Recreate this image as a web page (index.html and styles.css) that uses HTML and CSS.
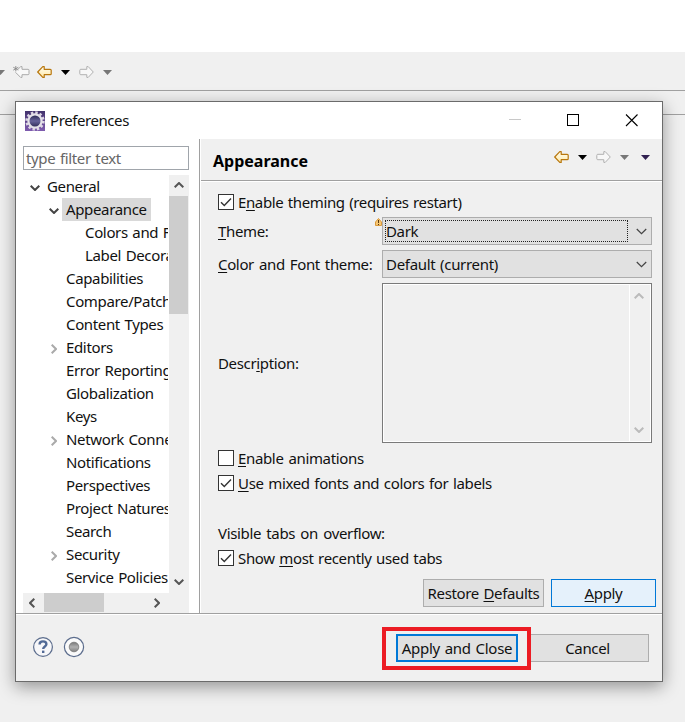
FILE: index.html
```
<!DOCTYPE html>
<html lang="en">
<head>
<meta charset="utf-8">
<title>Preferences</title>
<link rel="stylesheet" href="styles.css">
</head>
<body>
<svg class="defs" aria-hidden="true">
  <defs>
    <linearGradient id="gold" x1="0" y1="0" x2="0" y2="1"><stop offset="0" stop-color="#fffdf0"/><stop offset="1" stop-color="#ffe9a8"/></linearGradient>
    <linearGradient id="purple" x1="0" y1="0" x2="0" y2="1"><stop offset="0" stop-color="#42326c"/><stop offset="1" stop-color="#7f5caf"/></linearGradient>
    <linearGradient id="lens" x1="0" y1="0" x2="0" y2="1"><stop offset="0" stop-color="#22204a"/><stop offset=".5" stop-color="#67639a"/><stop offset="1" stop-color="#29264f"/></linearGradient>
    <linearGradient id="dot" x1="0" y1="0" x2="0" y2="1"><stop offset="0" stop-color="#777"/><stop offset=".5" stop-color="#b0b0b0"/><stop offset="1" stop-color="#808080"/></linearGradient>
    <symbol id="left" viewBox="0 0 15 12"><path d="M.7 6 5.8.6H7.2V3.3H13.2Q14.2 3.3 14.2 4.3V7.7Q14.2 8.7 13.2 8.7H7.2V11.4H5.8Z" stroke-linejoin="round"/></symbol>
    <symbol id="right" viewBox="0 0 15 12"><path d="M14.3 6 9.2.6H7.8V3.3H1.8Q.8 3.3.8 4.3V7.7Q.8 8.7 1.8 8.7H7.8V11.4H9.2Z" stroke-linejoin="round"/></symbol>
    <symbol id="tri" viewBox="0 0 9 5"><path d="M0 0H9L4.5 5Z"/></symbol>
    <symbol id="check" viewBox="0 0 14 14"><path d="M2 7.2 5.3 10.5 12 3.5" fill="none" stroke="#333" stroke-width="1.4"/></symbol>
    <symbol id="chev" viewBox="0 0 10 6"><path d="M.7.7 5 5 9.3.7" fill="none" stroke="currentColor" stroke-width="var(--w, 2)"/></symbol>
  </defs>
</svg>

<div class="menubar"></div>
<div class="toolbar">
  <svg class="tri gray edge"><use href="#tri"/></svg>
  <svg class="star-arrow" width="17" height="14" viewBox="0 0 17 14"><path d="M5 4.2 7.8 1.6H9V4.3H15Q16 4.3 16 5.3V8.7Q16 9.7 15 9.7H9V12.4H7.6L2.5 7.3" fill="#f8f8f8" stroke="#a9a9a9"/><path d="M2.8 1V6.4M.3 2.3 5.3 5.1M5.3 2.3 .3 5.1" stroke="#888" stroke-width=".9"/></svg>
  <svg class="arrow gold"><use href="#left"/></svg>
  <svg class="tri"><use href="#tri"/></svg>
  <svg class="arrow pale"><use href="#right"/></svg>
  <svg class="tri gray"><use href="#tri"/></svg>
</div>
<div class="tabstrip"></div>

<div class="dialog">
  <div class="titlebar">
    <svg width="20" height="20" viewBox="0 0 20 20"><rect width="20" height="20" fill="url(#purple)"/><circle cx="10" cy="10" r="8.4" fill="none" stroke="#dcd6e4" stroke-width="2.6" stroke-dasharray="2.4 2"/><circle cx="10" cy="10" r="6.6" fill="url(#lens)" stroke="#e4e1e8" stroke-width="2.2"/></svg>
    <span class="title">Preferences</span>
    <svg class="winctl" width="129" height="14" viewBox="0 0 129 14"><path d="M0 6.5H12" stroke="#c8c8c8"/><rect x="58.5" y="1.5" width="11" height="11" fill="none" stroke="#000"/><path d="M117 1.5 128.5 13M128.5 1.5 117 13" stroke="#000" stroke-width="1.1"/></svg>
  </div>

  <div class="content">
    <div class="side">
      <div class="filter">type filter text</div>
      <div class="treebox">
        <div class="tree">
          <div class="row l0"><svg class="open"><use href="#chev"/></svg><span>General</span></div>
          <div class="row l1"><svg class="open"><use href="#chev"/></svg><span class="selected">Appearance</span></div>
          <div class="row l2"><span>Colors and Fonts</span></div>
          <div class="row l2"><span>Label Decorations</span></div>
          <div class="row l1"><span>Capabilities</span></div>
          <div class="row l1"><span>Compare/Patch</span></div>
          <div class="row l1"><span>Content Types</span></div>
          <div class="row l1"><svg class="closed"><use href="#chev"/></svg><span>Editors</span></div>
          <div class="row l1"><span>Error Reporting</span></div>
          <div class="row l1"><span>Globalization</span></div>
          <div class="row l1"><span>Keys</span></div>
          <div class="row l1"><svg class="closed"><use href="#chev"/></svg><span>Network Connections</span></div>
          <div class="row l1"><span>Notifications</span></div>
          <div class="row l1"><span>Perspectives</span></div>
          <div class="row l1"><span>Project Natures</span></div>
          <div class="row l1"><span>Search</span></div>
          <div class="row l1"><svg class="closed"><use href="#chev"/></svg><span>Security</span></div>
          <div class="row l1"><span>Service Policies</span></div>
        </div>
        <div class="vbar"><svg class="sc up"><use href="#chev"/></svg><div class="vthumb"></div><svg class="sc down"><use href="#chev"/></svg></div>
      </div>
      <div class="hbar"><svg class="sc west"><use href="#chev"/></svg><div class="hthumb"></div><svg class="sc east"><use href="#chev"/></svg></div>
    </div>

    <div class="page">
      <div class="head">
        <h1>Appearance</h1>
        <svg class="arrow gold"><use href="#left"/></svg>
        <svg class="tri"><use href="#tri"/></svg>
        <svg class="arrow pale"><use href="#right"/></svg>
        <svg class="tri gray"><use href="#tri"/></svg>
        <svg class="tri violet"><use href="#tri"/></svg>
      </div>
      <div class="form">
        <div class="option"><i class="box"><svg><use href="#check"/></svg></i><span class="t-theming">E<u>n</u>able theming (requires restart)</span></div>
        <div class="field theme"><label><u>T</u>heme:</label>
          <svg class="warn" width="7" height="8" viewBox="0 0 7 8"><path d="M3.5.5 6.5 4V7.5H.5V4Z" fill="#f6c572" stroke="#d99a3c"/><path d="M3.5 2V5M3.5 6V7" stroke="#5a3a10"/></svg>
          <div class="combo"><span class="focus">Dark</span><svg class="drop"><use href="#chev"/></svg></div></div>
        <div class="field"><label class="t-color"><u>C</u>olor and Font theme:</label><div class="combo"><span class="plain">Default (current)</span><svg class="drop"><use href="#chev"/></svg></div></div>
        <div class="field desc"><label>Descr<u>i</u>ption:</label><div class="area"><div class="areabar"><svg class="sc up"><use href="#chev"/></svg><svg class="sc down"><use href="#chev"/></svg></div></div></div>
        <div class="option anim"><i class="box"></i><span class="t-anim"><u>E</u>nable animations</span></div>
        <div class="option"><i class="box"><svg><use href="#check"/></svg></i><span class="t-mixed"><u>U</u>se mixed fonts and colors for labels</span></div>
        <div class="option caption"><span class="t-visible">Visible tabs on overflow:</span></div>
        <div class="option"><i class="box"><svg><use href="#check"/></svg></i><span class="t-recent">Show <u>m</u>ost recently used tabs</span></div>
        <div class="actions"><div class="btn restore">Restore <u>D</u>efaults</div><div class="btn apply"><u>A</u>pply</div></div>
      </div>
    </div>
  </div>

  <div class="footer">
    <svg class="help" width="54" height="22" viewBox="0 0 54 22"><circle cx="11" cy="11" r="9.4" fill="#f7f7f9" stroke="#5c6d8d" stroke-width="1.2"/><path d="M7.6 8.4Q7.6 5.4 11 5.4T14.4 8.2C14.4 10.4 11.2 10.5 11.2 13" fill="none" stroke="#526a96" stroke-width="2.4"/><rect x="10" y="14.6" width="2.4" height="2.4" fill="#526a96"/><circle cx="42" cy="11" r="9.6" fill="#fafafa" stroke="#5c6d8d" stroke-width="1.2"/><circle cx="42" cy="11" r="4.8" fill="url(#dot)" stroke="#777" stroke-width=".8"/></svg>
    <div class="marked"><div class="btn default">Apply and Close</div></div>
    <div class="btn cancel">Cancel</div>
  </div>
</div>
</body>
</html>
```
FILE: styles.css
```
* { box-sizing: border-box; }
body { margin: 0; width: 685px; height: 722px; overflow: hidden; background: #f0f0f0; color: #111; font: 15px/23px "Noto Sans", "Open Sans", sans-serif; letter-spacing: -.35px; word-spacing: 1px; white-space: nowrap; }
svg { display: block; flex: none; }
u { text-underline-offset: 2px; text-decoration-thickness: 1px; text-decoration-skip-ink: none; }
.defs { position: absolute; width: 0; height: 0; }
.menubar { height: 52px; background: #fff; }
.toolbar { height: 39px; display: flex; align-items: center; border-bottom: 1px solid #a0a0a0; padding-top: 2px; }
.tabstrip { height: 24px; border-bottom: 1px solid #a0a0a0; }
.arrow { width: 15px; height: 12px; }
.gold { fill: url(#gold); stroke: #b8770d; stroke-width: 1.2; }
.pale { fill: #f7f7f7; stroke: #b0b0b0; }
.tri { width: 9px; height: 5px; fill: #000; margin: 1px 9px 0; }
.tri.gray { fill: #777; }
.tri.edge { margin: 1px 8px 0 -4px; }
.star-arrow { margin-right: 7px; }

.dialog { position: absolute; left: 15px; top: 101px; width: 648px; height: 581px; border: 1px solid #6b6b6b; background: #f0f0f0; box-shadow: 0 5px 16px rgba(0,0,0,.38); display: flex; flex-direction: column; }
.titlebar { flex: none; height: 37px; background: #fff; display: flex; align-items: center; padding: 0 20px 0 9px; }
.title { margin-left: 5px; letter-spacing: -.42px; }
.winctl { margin: -1px 4px 0 auto; }
.content { flex: none; height: 474px; display: flex; }
.side { width: 184px; background: #fff; padding: 7px 10px 0 7px; border-right: 1px solid #a0a0a0; display: flex; flex-direction: column; }
.filter { height: 24px; width: 166px; border: 1px solid #a0a5ab; color: #666; padding-left: 2px; line-height: 22px; letter-spacing: -.35px; }
.treebox { margin-top: 5px; height: 418px; width: 166px; display: flex; }
.tree { width: 146px; overflow: hidden; border-right: 1px solid #fff; }
.row { height: 23px; display: flex; align-items: center; }
.l0 { padding-left: 7px; }
.l1 { padding-left: 43px; }
.l2 { padding-left: 62px; }
.open, .closed { width: 10px; height: 6px; }
.open { color: #444; transform: translateY(1px); }
.closed { color: #aaa; transform: translateY(1px) rotate(-90deg); }
.l0 svg { margin-right: 7px; }
.l1 svg { margin: 0 7px 0 -17px; }
.selected { background: #d9d9d9; margin-left: -4px; padding: 0 4px; }
.vbar { width: 20px; background: #f0f0f0; display: flex; flex-direction: column; align-items: center; padding-right: 1px; }
.sc { width: 10px; height: 6px; color: #555; }
.up { transform: rotate(180deg); }
.vbar .up { margin: 7px 0 8px; }
.vthumb { width: 19px; height: 118px; background: #cdcdcd; }
.vbar .down { margin-top: auto; margin-bottom: 8px; }
.hbar { width: 166px; height: 20px; background: #f0f0f0; display: flex; align-items: center; }
.west { transform: rotate(90deg); margin: 0 7px 0 4px; }
.hthumb { width: 60px; height: 19px; background: #cdcdcd; align-self: flex-start; }
.east { transform: rotate(-90deg); margin-left: 48px; }

.page { width: 462px; border-left: 1px solid #fff; }
.head { height: 43px; display: flex; align-items: center; padding: 0 12px 6px; border-bottom: 1px solid #fff; box-shadow: inset 0 -1px #a0a0a0; }
h1 { margin: 9px auto 0 0; font-size: 16px; line-height: 23px; letter-spacing: 0; color: #000; }
.head .tri.gray { margin-right: 6px; }
.head .violet { fill: #302050; margin: 1px 0 0 6px; }
.form { padding: 9px 6px 0 17px; }
.option { height: 25px; display: flex; align-items: center; padding-bottom: 3px; }
.box { width: 16px; height: 16px; border: 1px solid #333; background: #fff; margin-right: 4px; }
.box svg { width: 14px; height: 14px; }
.field { display: flex; align-items: center; height: 28px; margin-bottom: 5px; }
.theme { margin-top: 1px; position: relative; }
label { width: 164px; }
.warn { position: absolute; left: 157px; top: 1px; }
.combo { width: 270px; height: 28px; border: 1px solid #adadad; background: #e1e1e1; display: flex; align-items: center; justify-content: space-between; padding: 0 4px 0 2px; }
.focus { width: 243px; height: 22px; line-height: 20px; border: 1px dotted #222; }
.plain { padding-left: 1px; letter-spacing: -.3px; }
.drop { width: 11px; height: 7px; color: #444; --w: 1.1; }
.desc { height: 160px; margin-bottom: 4px; }
.area { width: 270px; height: 160px; border: 1px solid #7a7a7a; outline: 1px solid #fff; outline-offset: -2px; display: flex; justify-content: flex-end; }
.areabar { width: 22px; border-left: 1px solid #fff; display: flex; flex-direction: column; align-items: center; justify-content: space-between; padding: 9px 3px 9px 0; }
.areabar .sc { color: #bbb; }
.t-theming { letter-spacing: -.38px; }
.t-color, .t-anim { word-spacing: 1.4px; }
.t-mixed { word-spacing: 1.1px; }
.t-visible { word-spacing: 1.7px; }
.caption { margin-top: 25px; }
.actions { display: flex; gap: 7px; justify-content: flex-end; margin-top: 7px; }
.btn { height: 28px; border: 1px solid #adadad; background: #e1e1e1; text-align: center; line-height: 27px; }
.restore { width: 121px; }
.apply { width: 105px; border-color: #0078d7; background: #e5f1fb; }
.footer { flex: none; height: 68px; border-top: 1px solid #a0a0a0; box-shadow: inset 0 1px #fff; display: flex; align-items: center; padding-left: 16px; }
.help { margin-top: -1px; }
.marked { width: 149px; height: 43px; border: 4px solid #ec1c24; margin: 2px 0 0 296px; padding: 3px 9px 4px 10px; }
.default { width: 122px; border: 2px solid #0078d7; line-height: 25px; letter-spacing: -.25px; }
.cancel { width: 118px; border-left: 0; padding-right: 4px; margin-top: 1px; }
```
